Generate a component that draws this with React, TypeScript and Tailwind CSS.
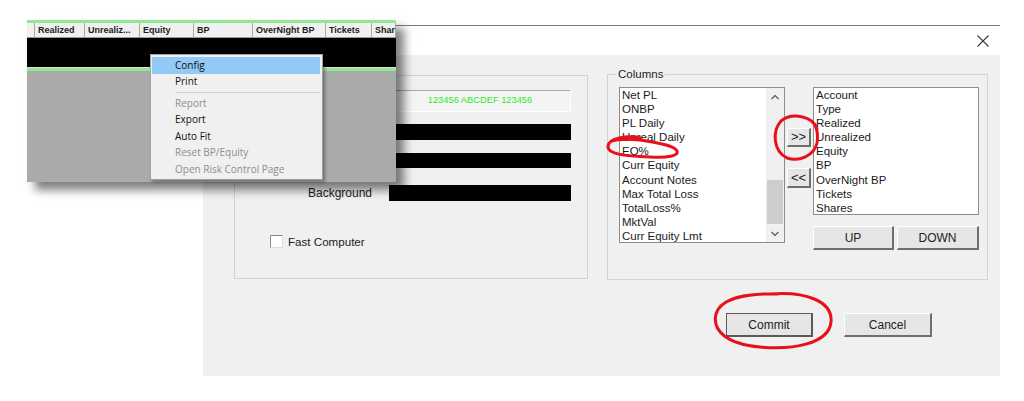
import React from "react";

const leftItems = [
  "Net PL",
  "ONBP",
  "PL Daily",
  "Unreal Daily",
  "EQ%",
  "Curr Equity",
  "Account Notes",
  "Max Total Loss",
  "TotalLoss%",
  "MktVal",
  "Curr Equity Lmt",
];

const rightItems = ["Account", "Type", "Realized", "Unrealized", "Equity", "BP", "OverNight BP", "Tickets", "Shares"];

const headerCols = [
  { label: "", w: "w-[8px]" },
  { label: "Realized", w: "w-[50px]" },
  { label: "Unrealiz...", w: "w-[55px]" },
  { label: "Equity", w: "w-[54px]" },
  { label: "BP", w: "w-[59px]" },
  { label: "OverNight BP", w: "w-[73px]" },
  { label: "Tickets", w: "w-[46px]" },
  { label: "Shar", w: "w-[24px]" },
];

const menuItems = [
  { label: "Config", active: true },
  { label: "Print" },
  { sep: true },
  { label: "Report", disabled: true },
  { label: "Export" },
  { label: "Auto Fit" },
  { label: "Reset BP/Equity", disabled: true },
  { label: "Open Risk Control Page", disabled: true },
];

function WinButton({ children, className = "", isDefault = false }: { children: React.ReactNode; className?: string; isDefault?: boolean }) {
  return (
    <div
      className={
        "flex items-center justify-center bg-[#e6e6e6] text-[12px] text-[#222] " +
        (isDefault
          ? "border border-[#5a5a5a] border-b-2 border-r-2 "
          : "border border-t-white border-l-white border-b-2 border-r-2 border-b-[#6e6e6e] border-r-[#6e6e6e] ") +
        className
      }
    >
      {children}
    </div>
  );
}

function ListBox({ items, className, scroll }: { items: string[]; className: string; scroll?: boolean }) {
  return (
    <div className={"flex border border-[#8d8d8d] bg-white overflow-hidden " + className}>
      <div className="flex-1 pl-[2px] text-[11.5px] leading-[14.1px] text-[#1a1a1a]">
        {items.map((it) => (
          <div key={it} className="whitespace-nowrap">
            {it}
          </div>
        ))}
      </div>
      {scroll && (
        <div className="w-[18px] bg-[#f0f0f0] flex flex-col items-center">
          <svg width="10" height="16" viewBox="0 0 10 16" className="mt-[1px]">
            <polyline points="1.5,10 5,6.5 8.5,10" fill="none" stroke="#555" strokeWidth="1.2" />
          </svg>
          <div className="mt-[75px] w-[16px] h-[44px] bg-[#cdcdcd]" />
          <svg width="10" height="16" viewBox="0 0 10 16" className="mt-[2px]">
            <polyline points="1.5,6 5,9.5 8.5,6" fill="none" stroke="#555" strokeWidth="1.2" />
          </svg>
        </div>
      )}
    </div>
  );
}

export default function App() {
  return (
    <div className="relative w-[1024px] h-[401px] overflow-hidden bg-white font-['Liberation_Sans',Arial,sans-serif]">
      {/* Config dialog */}
      <div className="ml-[203px] mt-[25px] w-[797px] h-[351px] flex flex-col border-t border-[#7a7a7a]">
        <div className="h-[29px] bg-white flex items-center justify-end pr-[11px]">
          <svg width="12" height="12" viewBox="0 0 12 12">
            <path d="M0.5 0.5 L11.5 11.5 M11.5 0.5 L0.5 11.5" stroke="#3a3a3a" strokeWidth="1.1" />
          </svg>
        </div>
        <div className="flex-1 bg-[#f0f0f0] flex flex-col">
          <div className="flex items-start pl-[31px] pt-[19px] gap-[19px]">
            {/* Colors group */}
            <div className="mt-[1px] w-[354px] h-[204px] border border-[#d3d3d3] flex flex-col">
              <div className="mt-[14px] flex items-center">
                <div className="w-[137px]" />
                <div className="ml-[17px] w-[182px] h-[22px] flex items-center justify-center bg-[#f4f4f4] border border-[#a8a8a8] border-r-white border-b-white text-[9.3px] text-[#2fe82f]">
                  123456 ABCDEF 123456
                </div>
              </div>
              <div className="mt-[12px] flex items-center">
                <div className="w-[137px]" />
                <div className="ml-[17px] w-[182px] h-[16px] bg-black" />
              </div>
              <div className="mt-[13px] flex items-center">
                <div className="w-[137px]" />
                <div className="ml-[17px] w-[182px] h-[15px] bg-black" />
              </div>
              <div className="mt-[16px] flex items-center">
                <div className="w-[137px] text-right text-[12px] text-[#222]">Background</div>
                <div className="ml-[17px] w-[182px] h-[16px] bg-black" />
              </div>
              <div className="mt-[31px] pl-[35px] flex items-center leading-[17px]">
                <div className="w-[13px] h-[13px] bg-white border border-[#8a8a8a] border-r-[#dcdcdc] border-b-[#dcdcdc]" />
                <div className="ml-[5px] text-[11.6px] text-[#222]">Fast Computer</div>
              </div>
            </div>

            {/* Columns group */}
            <div className="relative w-[381px] h-[206px] border border-[#d3d3d3]">
              <div className="absolute -top-[8px] left-[8px] px-[2px] bg-[#f0f0f0] text-[11.5px] leading-[14px] text-[#222]">
                Columns
              </div>
              <div className="pl-[11px] pt-[12px] flex items-start">
                <ListBox items={leftItems} className="w-[166px] h-[156px]" scroll />
                <div className="ml-[2px] w-[24px] pt-[41px] flex flex-col">
                  <WinButton className="h-[19px] text-[13px]">&gt;&gt;</WinButton>
                  <WinButton className="mt-[21px] h-[20px] text-[13px]">&lt;&lt;</WinButton>
                </div>
                <div className="ml-[2px] flex flex-col">
                  <ListBox items={rightItems} className="w-[166px] h-[128px]" />
                  <div className="mt-[11px] flex gap-[3px]">
                    <WinButton className="w-[81px] h-[24px]">UP</WinButton>
                    <WinButton className="w-[82px] h-[24px]">DOWN</WinButton>
                  </div>
                </div>
              </div>
            </div>
          </div>

          <div className="flex pl-[523px] mt-[33px] gap-[31px]">
            <WinButton isDefault className="w-[87px] h-[24px]">
              Commit
            </WinButton>
            <WinButton className="w-[88px] h-[24px]">Cancel</WinButton>
          </div>
        </div>
      </div>

      {/* Account window with right-click menu, pasted over the dialog */}
      <div className="absolute left-[27px] top-[20px] w-[369px] h-[162px] flex flex-col bg-[#aaaaaa] overflow-hidden shadow-[8px_8px_9px_rgba(0,0,0,0.5)]">
        <div className="h-[3px] bg-[#8fe98f]" />
        <div className="h-[15px] flex bg-[#f0f0f0] border-b border-[#9a9a9a]">
          {headerCols.map((c, i) => (
            <div
              key={i}
              className={"shrink-0 h-full border-r border-[#a8a8a8] pl-[3px] text-[9px] leading-[14px] font-bold text-[#1a1a1a] whitespace-nowrap " + c.w}
            >
              {c.label}
            </div>
          ))}
        </div>
        <div className="h-[29px] bg-black" />
        <div className="h-[1px] bg-[#dedede]" />
        <div className="h-[3px] bg-[#8fe98f]" />
        <div className="flex-1" />
      </div>

      <div className="absolute left-[150px] top-[54px] w-[173px] h-[126px] bg-[#f0f0f0] border border-[#a0a0a0] p-[2px] pl-[1px] shadow-[2px_2px_3px_rgba(0,0,0,0.35)] font-['Open_Sans',sans-serif] text-[10px]">
        {menuItems.map((m, i) =>
          m.sep ? (
            <div key={i} className="h-[5px] flex items-center pl-[24px]">
              <div className="h-[1px] w-full bg-[#d4d4d4]" />
            </div>
          ) : (
            <div
              key={i}
              className={
                "h-[16.5px] flex items-center pl-[23px] " +
                (m.active ? "bg-[#92c9f6] text-[#111]" : m.disabled ? "text-[#8e8e8e]" : "text-[#111]")
              }
            >
              {m.label}
            </div>
          )
        )}
      </div>

      {/* Red pen marks */}
      <svg className="absolute inset-0 pointer-events-none" width="1024" height="401" viewBox="0 0 1024 401">
        <g fill="none" stroke="#e8111b" strokeWidth="3" strokeLinecap="round" strokeLinejoin="round">
          <path d="M641 138 C626 135 609 138 608 146 C607 154 624 156 650 157 C668 158 679 156 677 151 C675 146 660 143 640 140 C628 139 618 139 612 141" />
          <path d="M817 129 C813 116 792 112 781 121 C772 131 773 151 787 158 C799 162 814 156 817 143 C818 136 818 131 815 125" />
          <path d="M770 294 C805 291 833 301 831 322 C829 344 792 350 760 347 C727 344 712 331 716 314 C720 300 742 293 778 294" />
        </g>
      </svg>
    </div>
  );
}
